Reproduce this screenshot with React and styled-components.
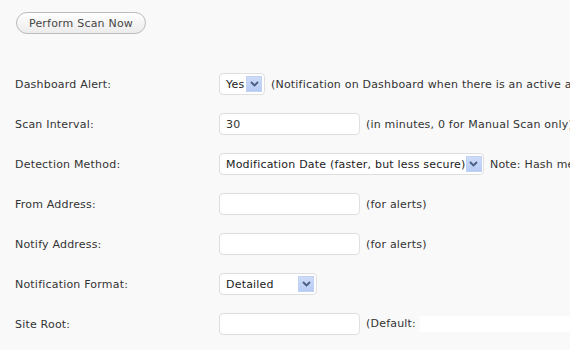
import React from 'react';
import styled, { createGlobalStyle } from 'styled-components';

const GlobalStyle = createGlobalStyle`
  html, body {
    margin: 0;
    padding: 0;
    background: #f9f9f9;
  }
  body {
    font-family: "DejaVu Sans", Verdana, sans-serif;
    font-size: 11px;
    letter-spacing: 0.2px;
    color: #333333;
  }
`;

const Page = styled.div`
  width: 570px;
  height: 350px;
  overflow: hidden;
  padding: 12px 0 0 15px;
  box-sizing: border-box;
`;

const ScanButton = styled.button`
  display: block;
  margin: 0 0 30px 1px;
  height: 22px;
  padding: 0;
  width: 130px;
  border: 1px solid #bbbbbb;
  border-radius: 11px;
  background: linear-gradient(to bottom, #ffffff 0%, #f3f3f3 60%, #ececec 100%);
  font-family: "DejaVu Sans", Verdana, sans-serif;
  font-size: 11px;
  letter-spacing: 0.2px;
  color: #464646;
  white-space: nowrap;
`;

const Form = styled.div`
  display: flex;
  flex-direction: column;
`;

const Row = styled.div`
  display: flex;
  align-items: center;
  height: 40px;
`;

const Label = styled.div`
  width: 204px;
  flex: none;
  white-space: nowrap;
`;

const Field = styled.div`
  display: flex;
  align-items: center;
  white-space: nowrap;
`;

const TextInput = styled.div`
  box-sizing: border-box;
  width: 141px;
  height: 22px;
  flex: none;
  border: 1px solid #dfdfdf;
  border-radius: 4px;
  background: #ffffff;
  padding: 0 6px;
  display: flex;
  align-items: center;
  color: #333;
`;

const Select = styled.div`
  box-sizing: border-box;
  width: ${p => p.$width}px;
  height: 22px;
  flex: none;
  border: 1px solid #dfdfdf;
  border-radius: 4px;
  background: #ffffff;
  padding: 0 2px 0 6px;
  display: flex;
  align-items: center;
  justify-content: space-between;
  color: #222;
`;

const Arrow = styled.span`
  width: 16px;
  height: 16px;
  flex: none;
  display: flex;
  align-items: center;
  justify-content: center;
  background: linear-gradient(to bottom, #cfdcf9 0%, #b6cbf4 100%);
  border: 1px solid #c0d1f3;
  box-sizing: border-box;
`;

const Hint = styled.span`
  margin-left: 6px;
  color: #333;
`;

const Redacted = styled.span`
  display: inline-block;
  width: 150px;
  height: 16px;
  background: #ffffff;
  vertical-align: middle;
`;

const Chevron = () => (
  <Arrow>
    <svg width="9" height="6" viewBox="0 0 9 6">
      <path d="M1 1 L4.5 4.5 L8 1" fill="none" stroke="#4b5d80" strokeWidth="1.8" />
    </svg>
  </Arrow>
);

export default function App() {
  return (
    <Page>
      <GlobalStyle />
      <ScanButton>Perform Scan Now</ScanButton>
      <Form>
        <Row>
          <Label>Dashboard Alert:</Label>
          <Field>
            <Select $width={46}>Yes<Chevron /></Select>
            <Hint>(Notification on Dashboard when there is an active alert)</Hint>
          </Field>
        </Row>
        <Row>
          <Label>Scan Interval:</Label>
          <Field>
            <TextInput>30</TextInput>
            <Hint>(in minutes, 0 for Manual Scan only)</Hint>
          </Field>
        </Row>
        <Row>
          <Label>Detection Method:</Label>
          <Field>
            <Select $width={265}>Modification Date (faster, but less secure)<Chevron /></Select>
            <Hint>Note: Hash method is slower but more secure</Hint>
          </Field>
        </Row>
        <Row>
          <Label>From Address:</Label>
          <Field>
            <TextInput />
            <Hint>(for alerts)</Hint>
          </Field>
        </Row>
        <Row>
          <Label>Notify Address:</Label>
          <Field>
            <TextInput />
            <Hint>(for alerts)</Hint>
          </Field>
        </Row>
        <Row>
          <Label>Notification Format:</Label>
          <Field>
            <Select $width={98}>Detailed<Chevron /></Select>
          </Field>
        </Row>
        <Row>
          <Label>Site Root:</Label>
          <Field>
            <TextInput />
            <Hint>(Default: <Redacted /></Hint>
          </Field>
        </Row>
      </Form>
    </Page>
  );
}
